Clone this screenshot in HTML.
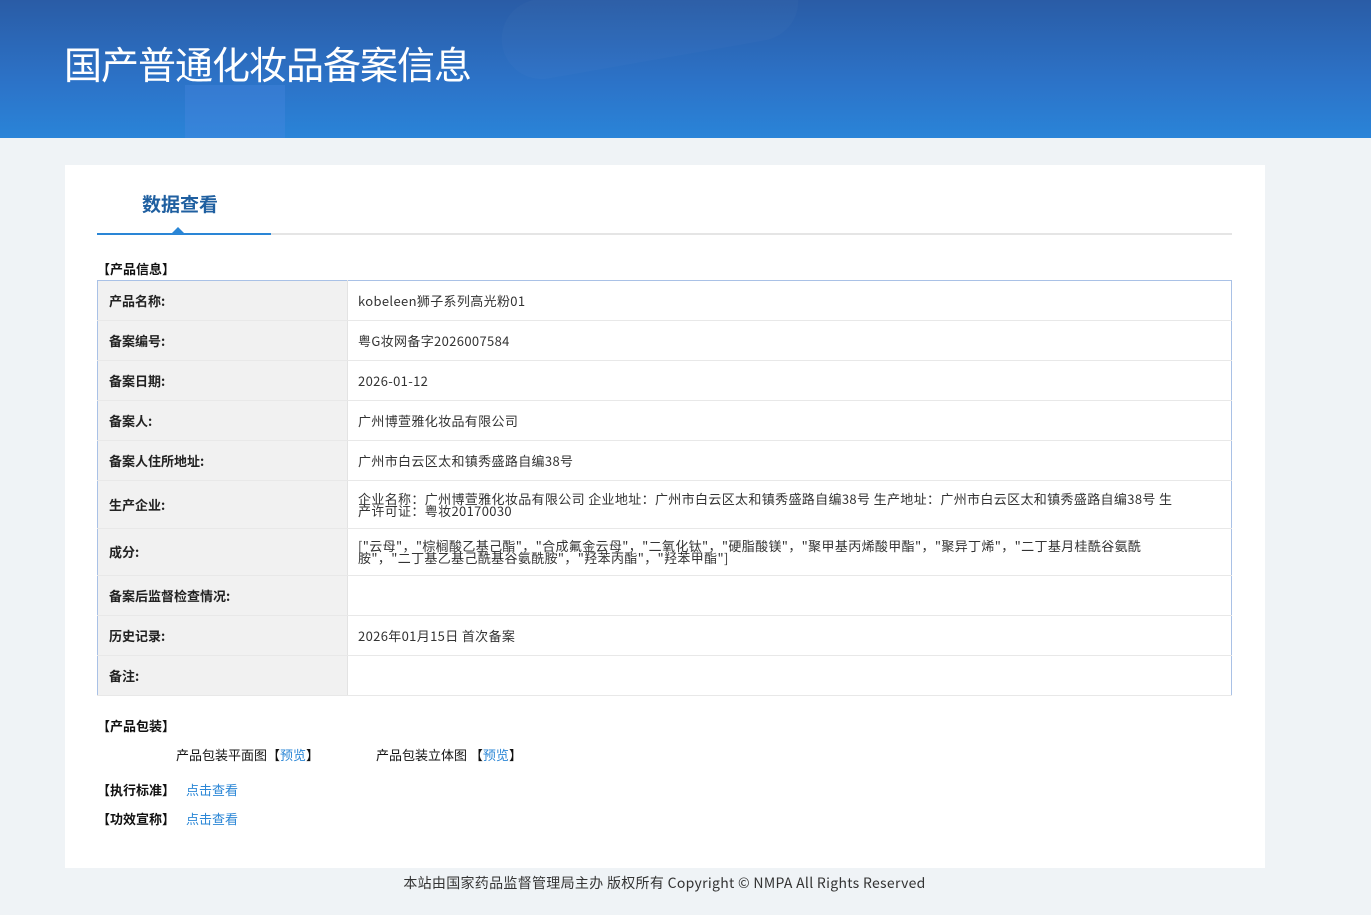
<!DOCTYPE html>
<html><head><meta charset="utf-8"><style>
*{margin:0;padding:0;box-sizing:border-box}
body{width:1371px;height:915px;background:#eff3f6;font-family:"Noto Sans CJK SC","Liberation Sans",sans-serif;color:#333;font-size:13px;position:relative;overflow:hidden}
.hd{position:absolute;left:0;top:0;width:1371px;height:138px;background:linear-gradient(180deg,#2a5ca6 0%,#2c73c8 60%,#2a84d8 100%);overflow:hidden}
.hd .b1{position:absolute;left:185px;top:85px;width:100px;height:60px;background:rgba(80,140,230,.3)}
.hd .b2{position:absolute;left:500px;top:-20px;width:300px;height:80px;border-radius:40px;background:rgba(255,255,255,.02);transform:rotate(-10deg)}
.hd h1{position:absolute;left:64px;top:38px;font-size:38px;line-height:50px;font-weight:normal;color:#fff;letter-spacing:-1px;font-family:"Noto Sans CJK SC",sans-serif}
.card{position:absolute;left:65px;top:165px;width:1200px;height:703px;background:#fff}
.tab{position:absolute;left:77px;top:25px;font-size:19px;line-height:28px;font-weight:bold;color:#1f5fa0}
.line{position:absolute;left:32px;top:68px;width:1135px;height:2px;background:#e5e5e5}
.line i{position:absolute;left:0;top:0;width:174px;height:2px;background:#2a86d6}
.tri{position:absolute;left:107px;top:62px;width:0;height:0;border-left:6px solid transparent;border-right:6px solid transparent;border-bottom:6px solid #2a86d6}
.sec{position:absolute;font-weight:bold;color:#111;font-size:13px;line-height:18px}
table{position:absolute;left:32px;top:115px;width:1135px;border-collapse:collapse;border:1px solid #a9c1e6}
td{border-bottom:1px solid #e8e8e8;height:40px;vertical-align:middle;font-size:13px;line-height:12px}
td.l{width:250px;background:#f1f1f1;font-weight:bold;color:#222;padding-left:11px;border-right:1px solid #e3e3e3}
td.v{padding-left:10px;color:#333;letter-spacing:.35px}
a{color:#2a86d6;text-decoration:none}
.abs{position:absolute;line-height:18px}
.ft{position:absolute;top:873px;left:0;width:1329px;text-align:center;font-size:14px;line-height:20px;color:#333;letter-spacing:.3px}
</style></head><body>
<div class="hd"><div class="b1"></div><div class="b2"></div><h1>国产普通化妆品备案信息</h1></div>
<div class="card">
<div class="tab">数据查看</div>
<div class="line"><i></i></div><div class="tri"></div>
<div class="sec" style="left:32px;top:95px">【产品信息】</div>
<table>
<tr><td class="l">产品名称:</td><td class="v">kobeleen狮子系列高光粉01</td></tr>
<tr><td class="l">备案编号:</td><td class="v">粤G妆网备字2026007584</td></tr>
<tr><td class="l">备案日期:</td><td class="v">2026-01-12</td></tr>
<tr><td class="l">备案人:</td><td class="v">广州博萱雅化妆品有限公司</td></tr>
<tr><td class="l">备案人住所地址:</td><td class="v">广州市白云区太和镇秀盛路自编38号</td></tr>
<tr><td class="l" style="height:48px">生产企业:</td><td class="v">企业名称：广州博萱雅化妆品有限公司 企业地址：广州市白云区太和镇秀盛路自编38号 生产地址：广州市白云区太和镇秀盛路自编38号 生<br>产许可证：粤妆20170030</td></tr>
<tr><td class="l" style="height:47px">成分:</td><td class="v">["云母"，"棕榈酸乙基己酯"，"合成氟金云母"，"二氧化钛"，"硬脂酸镁"，"聚甲基丙烯酸甲酯"，"聚异丁烯"，"二丁基月桂酰谷氨酰<br>胺"，"二丁基乙基己酰基谷氨酰胺"，"羟苯丙酯"，"羟苯甲酯"]</td></tr>
<tr><td class="l">备案后监督检查情况:</td><td class="v"></td></tr>
<tr><td class="l">历史记录:</td><td class="v">2026年01月15日 首次备案</td></tr>
<tr><td class="l">备注:</td><td class="v"></td></tr>
</table>
<div class="sec" style="left:32px;top:552px">【产品包装】</div>
<div class="abs" style="left:111px;top:581px;color:#111">产品包装平面图【<a>预览</a>】</div>
<div class="abs" style="left:311px;top:581px;color:#111">产品包装立体图 【<a>预览</a>】</div>
<div class="sec" style="left:32px;top:616px">【执行标准】</div><a class="abs" style="left:121px;top:616px">点击查看</a>
<div class="sec" style="left:32px;top:645px">【功效宣称】</div><a class="abs" style="left:121px;top:645px">点击查看</a>
</div>
<div class="ft">本站由国家药品监督管理局主办 版权所有 Copyright © NMPA All Rights Reserved</div>
</body></html>
